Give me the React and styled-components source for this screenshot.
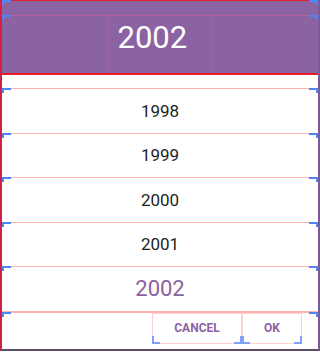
import React from "react";
import styled, { createGlobalStyle, css } from "styled-components";

const Global = createGlobalStyle`
  html, body { margin: 0; padding: 0; background: #ffffff; }
  body { font-family: Roboto, "Noto Sans", sans-serif; }
`;

const BLUE = "#4f86f7";
const PINK = "#ffb3b3";

const corners = css`
  &::before, &::after {
    content: "";
    position: absolute;
    top: -1px;
    width: 7px;
    height: 3px;
    border-top: 2px solid ${BLUE};
    pointer-events: none;
  }
  &::before { left: 0; border-left: 2px solid ${BLUE}; }
  &::after { right: 0; border-right: 2px solid ${BLUE}; }
`;

const Dialog = styled.div`
  width: 320px;
  height: 351px;
  box-sizing: border-box;
  border-left: 2px solid #cf2248;
  border-right: 2px solid #7a5a98;
  border-bottom: 2px solid #5e4d6c;
  display: flex;
  flex-direction: column;
  background: #ffffff;
`;

const Header = styled.div`
  height: 75px;
  box-sizing: border-box;
  background: #8b62a2;
  border-top: 1px solid #e0202c;
  border-bottom: 2px solid #ec1c24;
  padding-top: 14px;
  position: relative;
  ${corners}
`;

const HeaderInner = styled.div`
  height: 100%;
  box-sizing: border-box;
  border-top: 1px solid #b25e9c;
  display: flex;
  justify-content: center;
  position: relative;
  ${corners}
`;

const HeaderYear = styled.div`
  width: 105px;
  box-sizing: border-box;
  border-left: 1px solid #a0629f;
  border-right: 1px solid #a0629f;
  color: #ffffff;
  font-size: 31px;
  line-height: 44px;
  text-align: left;
  padding-left: 9px;
`;

const Spacer = styled.div`
  height: 13px;
`;

const List = styled.div`
  display: flex;
  flex-direction: column;
`;

const Row = styled.div`
  height: 44.5px;
  box-sizing: border-box;
  border-top: 1px solid ${PINK};
  display: flex;
  align-items: center;
  justify-content: center;
  font-size: ${(p) => (p.$selected ? "22px" : "17px")};
  color: ${(p) => (p.$selected ? "#8b62a2" : "#1e1e1e")};
  position: relative;
  ${corners}
`;

const Actions = styled.div`
  border-top: 2px solid ${PINK};
  display: flex;
  justify-content: flex-end;
  padding-right: 16px;
  position: relative;
  ${corners}
`;

const Button = styled.button`
  all: unset;
  box-sizing: border-box;
  width: ${(p) => p.$w}px;
  height: 31px;
  border: 1px solid #ffd0d0;
  display: flex;
  align-items: center;
  justify-content: center;
  font-family: Roboto, sans-serif;
  font-weight: 700;
  font-size: 12px;
  color: #8b62a2;
  position: relative;
  &::before, &::after {
    content: "";
    position: absolute;
    bottom: -1px;
    width: 6px;
    height: 6px;
    border-bottom: 2px solid #7fa3f4;
  }
  &::before { left: -1px; border-left: 2px solid #7fa3f4; }
  &::after { right: -1px; border-right: 2px solid #7fa3f4; }
`;

const years = [1998, 1999, 2000, 2001, 2002];

export default function App() {
  return (
    <>
      <Global />
      <Dialog>
        <Header>
          <HeaderInner>
            <HeaderYear>2002</HeaderYear>
          </HeaderInner>
        </Header>
        <Spacer />
        <List>
          {years.map((y) => (
            <Row key={y} $selected={y === 2002}>
              {y}
            </Row>
          ))}
        </List>
        <Actions>
          <Button $w={90}>CANCEL</Button>
          <Button $w={60}>OK</Button>
        </Actions>
      </Dialog>
    </>
  );
}
